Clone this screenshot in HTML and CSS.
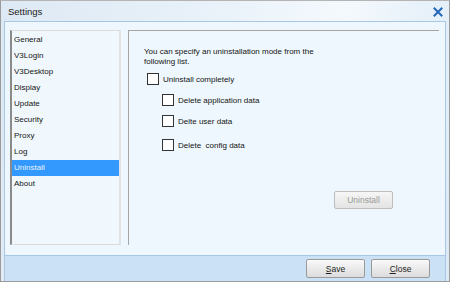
FILE: index.html
```html
<!DOCTYPE html>
<html lang="en">
<head>
    <meta charset="UTF-8">
    <title>Settings</title>
    <link rel="stylesheet" href="styles.css">
</head>
<body>
    <div class="window">
        <div class="titlebar">
            <span class="title">Settings</span>
            <span class="close-x">
                <svg width="10" height="10" viewBox="0 0 10 10">
                    <path d="M1.5 1.5 L8.5 8.5 M8.5 1.5 L1.5 8.5" stroke="#2467b8" stroke-width="2" stroke-linecap="square"/>
                </svg>
            </span>
        </div>
        <div class="frame">
            <div class="content">
                <ul class="nav-list">
                    <li>General</li>
                    <li>V3Login</li>
                    <li>V3Desktop</li>
                    <li>Display</li>
                    <li>Update</li>
                    <li>Security</li>
                    <li>Proxy</li>
                    <li>Log</li>
                    <li class="selected">Uninstall</li>
                    <li>About</li>
                </ul>
                <div class="panel">
                    <p class="intro">You can specify an uninstallation mode from the<br>following list.</p>
                    <label class="check"><span class="box"></span>Uninstall completely</label>
                    <label class="check sub"><span class="box"></span>Delete application data</label>
                    <label class="check sub"><span class="box"></span>Delte user data</label>
                    <label class="check sub"><span class="box"></span>Delete&nbsp; config data</label>
                    <div class="panel-actions">
                        <button class="btn disabled">Uninstall</button>
                    </div>
                </div>
            </div>
            <div class="footer">
                <button class="btn"><u>S</u>ave</button>
                <button class="btn"><u>C</u>lose</button>
            </div>
        </div>
    </div>
</body>
</html>
```

FILE: styles.css
```css
* {
    margin: 0;
    padding: 0;
    box-sizing: border-box;
}

body {
    width: 450px;
    height: 282px;
    overflow: hidden;
    font-family: 'Liberation Sans', Arial, sans-serif;
    font-size: 8px;
    color: #141414;
    background: #fff;
}

.window {
    width: 450px;
    height: 282px;
    display: flex;
    flex-direction: column;
    border: 1px solid #9b9b9b;
    border-top-color: #b4b4b4;
    background: linear-gradient(100deg, #dde9f4 0%, #e8f1f9 40%, #f4f9fd 70%, #dceaf6 100%);
}

.titlebar {
    height: 20px;
    display: flex;
    align-items: center;
    justify-content: space-between;
    padding: 0 6px 0 7px;
}

.title {
    font-size: 9.5px;
    color: #222;
}

.close-x {
    display: flex;
    margin-top: 1px;
}

.frame {
    flex: 1;
    margin: 0 3px 0 3px;
    border: 1px solid #a9c6e2;
    border-bottom: none;
    background: #eef7fd;
    display: flex;
    flex-direction: column;
}

.content {
    flex: 1;
    display: flex;
    padding: 8px 6px 0 5px;
    gap: 7px;
}

/* left navigation list */
.nav-list {
    list-style: none;
    width: 111px;
    height: 215px;
    background: #f1f8fd;
    border: 1px solid #dcdcdc;
    border-left: 2px solid #8a8a8a;
    border-right: 2px solid #e2e2e2;
    padding-top: 1px;
}

.nav-list li {
    height: 16px;
    line-height: 16px;
    padding-left: 2px;
}

.nav-list li.selected {
    background: #3399ff;
    color: #e8f2ff;
}

/* right panel */
.panel {
    flex: 1;
    height: 215px;
    border-top: 1px solid #a5a5a5;
    border-left: 1px solid #a5a5a5;
    padding: 16px 0 0 15px;
    display: flex;
    flex-direction: column;
    align-items: flex-start;
}

.intro {
    line-height: 10px;
    margin-bottom: 6px;
}

.check {
    display: flex;
    align-items: center;
    height: 12px;
    margin-left: 3px;
    margin-bottom: 9px;
}

.check.sub {
    margin-left: 18px;
}

.check:nth-of-type(3) {
    margin-bottom: 12px;
}

.box {
    width: 12px;
    height: 12px;
    border: 1px solid #333;
    background: #fff;
    margin-right: 4px;
}

.panel-actions {
    align-self: stretch;
    display: flex;
    justify-content: flex-end;
    padding-right: 46px;
    margin-top: 31px;
}

.btn {
    font-family: 'Liberation Sans', Arial, sans-serif;
    font-size: 8.5px;
    color: #1e1e1e;
    height: 18px;
    border: 1px solid #9a9a9a;
    border-radius: 2px;
    background: linear-gradient(#fafafa, #eaeaea 50%, #dcdcdc);
    width: 59px;
}

.btn.disabled {
    color: #9a9a9a;
    border-color: #bdbdbd;
    background: linear-gradient(#f6f6f6, #e4e4e4);
}

.footer {
    height: 26px;
    background: #cbe1f6;
    border-top: 1px solid #a7c7e6;
    display: flex;
    align-items: center;
    justify-content: flex-end;
    gap: 6px;
    padding-right: 15px;
}

.footer .btn {
    height: 19px;
}
```
